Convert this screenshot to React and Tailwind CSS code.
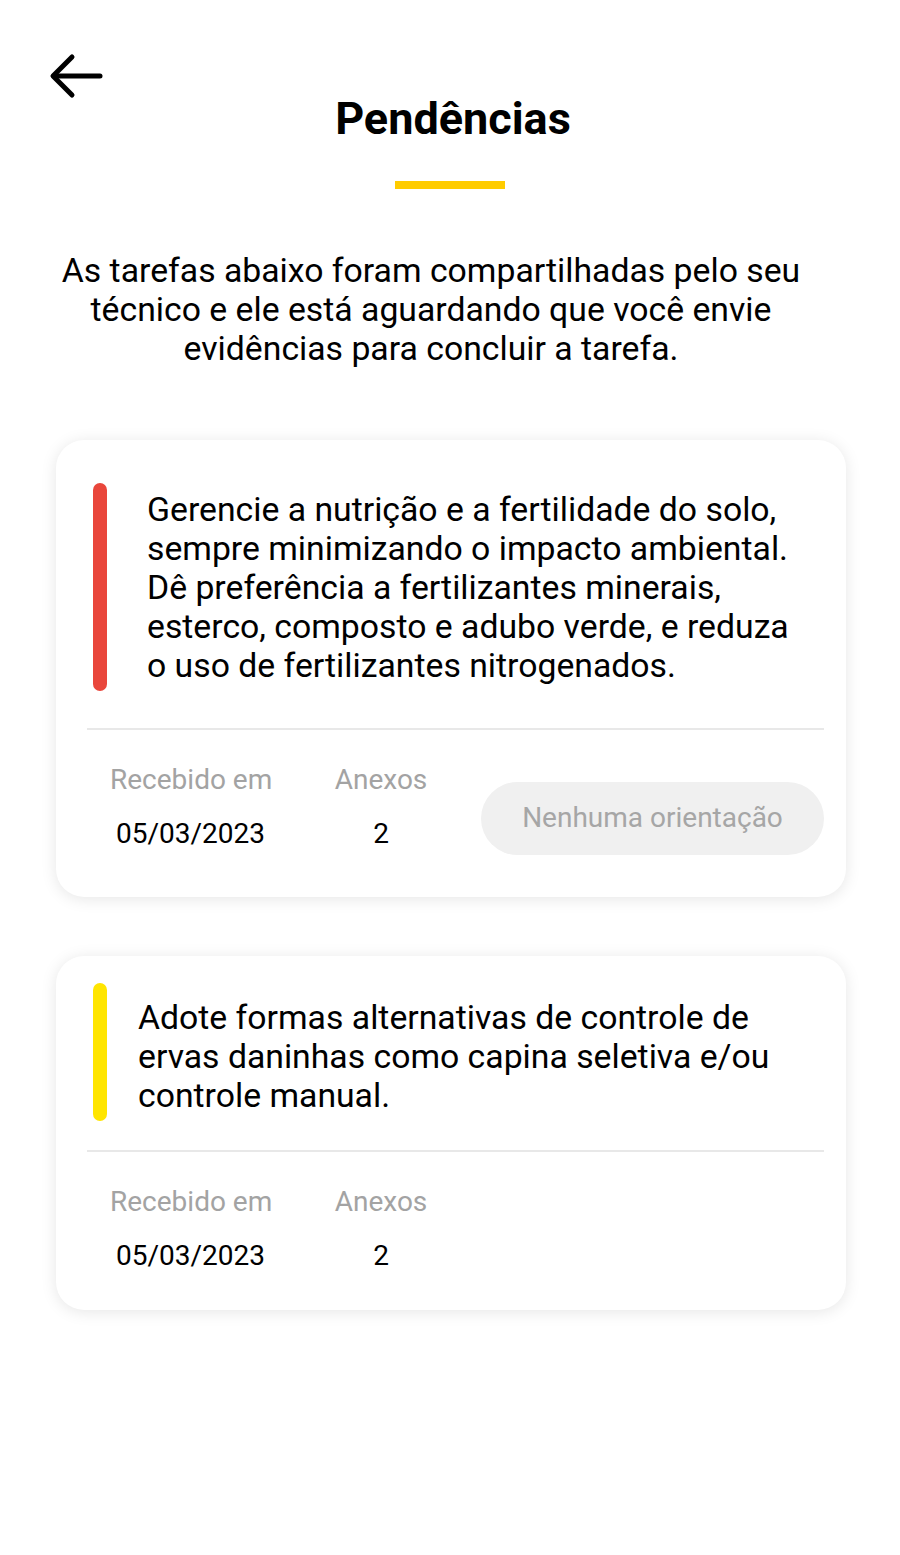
import React from 'react';

const tasks = [
  {
    id: 1,
    color: 'bg-[#e9463b]',
    cardPad: 'pt-[43px] pb-[42px]',
    barHeight: 'h-[208px]',
    textPad: 'pl-[40px] pt-[7px]',
    dividerGap: 'mt-[37px]',
    text: 'Gerencie a nutrição e a fertilidade do solo, sempre minimizando o impacto ambiental. Dê preferência a fertilizantes minerais, esterco, composto e adubo verde, e reduza o uso de fertilizantes nitrogenados.',
    received: '05/03/2023',
    attachments: 2,
    showButton: true,
  },
  {
    id: 2,
    color: 'bg-[#ffe500]',
    cardPad: 'pt-[27px] pb-[36px]',
    barHeight: 'h-[138px]',
    textPad: 'pl-[31px] pt-[15px]',
    dividerGap: 'mt-[29px]',
    text: 'Adote formas alternativas de controle de ervas daninhas como capina seletiva e/ou controle manual.',
    received: '05/03/2023',
    attachments: 2,
    showButton: false,
  },
];

const TaskCard = ({ task }) => (
  <div className={`bg-white rounded-[28px] shadow-[0_2px_16px_rgba(0,0,0,0.10)] ${task.cardPad}`}>
    <div className="flex items-start pl-[37px] pr-[46px]">
      <div className={`w-[14px] shrink-0 rounded-full ${task.color} ${task.barHeight}`} />
      <p className={`${task.textPad} text-[33.75px] leading-[39px] text-black`}>{task.text}</p>
    </div>
    <div className={`ml-[31px] mr-[22px] h-[2px] bg-[#e8e8e8] ${task.dividerGap}`} />
    <div className="flex items-start ml-[54px] mr-[22px] mt-[32px]">
      <div className="flex flex-col items-start w-[225px]">
        <span className="text-[28px] leading-[36px] text-[#a3a3a3]">Recebido em</span>
        <span className="mt-[18px] ml-[6px] text-[28px] leading-[36px] text-black">{task.received}</span>
      </div>
      <div className="flex flex-col items-center w-[92px]">
        <span className="text-[28px] leading-[36px] text-[#a3a3a3]">Anexos</span>
        <span className="mt-[18px] text-[28px] leading-[36px] text-black">{task.attachments}</span>
      </div>
      {task.showButton && (
        <button className="ml-auto mt-[20px] w-[343px] h-[73px] pb-[2px] rounded-full bg-[#f0f0f0] text-[28px] text-[#a6a6a6]">
          Nenhuma orientação
        </button>
      )}
    </div>
  </div>
);

export default function App() {
  return (
    <div className="min-h-[1555px] bg-white font-['Roboto',sans-serif]">
      <div className="relative pt-[93px]">
        <button className="absolute left-[48px] top-[52px] text-black">
          <svg width="56" height="48" viewBox="0 0 56 48" fill="none" stroke="currentColor" strokeWidth="5" strokeLinecap="round" strokeLinejoin="round">
            <path d="M52 24H6" />
            <path d="M24 5L5 24l19 19" />
          </svg>
        </button>
        <h1 className="pl-[6px] text-center text-[45px] leading-[52px] font-bold text-black">Pendências</h1>
        <div className="mx-auto mt-[36px] w-[110px] h-[8px] bg-[#ffcc00]" />
      </div>
      <p className="mt-[62px] pl-[40px] pr-[78px] text-center text-[33.75px] leading-[39px] text-black">
        As tarefas abaixo foram compartilhadas pelo seu técnico e ele está aguardando que você envie evidências para concluir a tarefa.
      </p>
      <div className="mt-[72px] ml-[56px] mr-[54px] flex flex-col gap-[59px]">
        {tasks.map((task) => (
          <TaskCard key={task.id} task={task} />
        ))}
      </div>
    </div>
  );
}
